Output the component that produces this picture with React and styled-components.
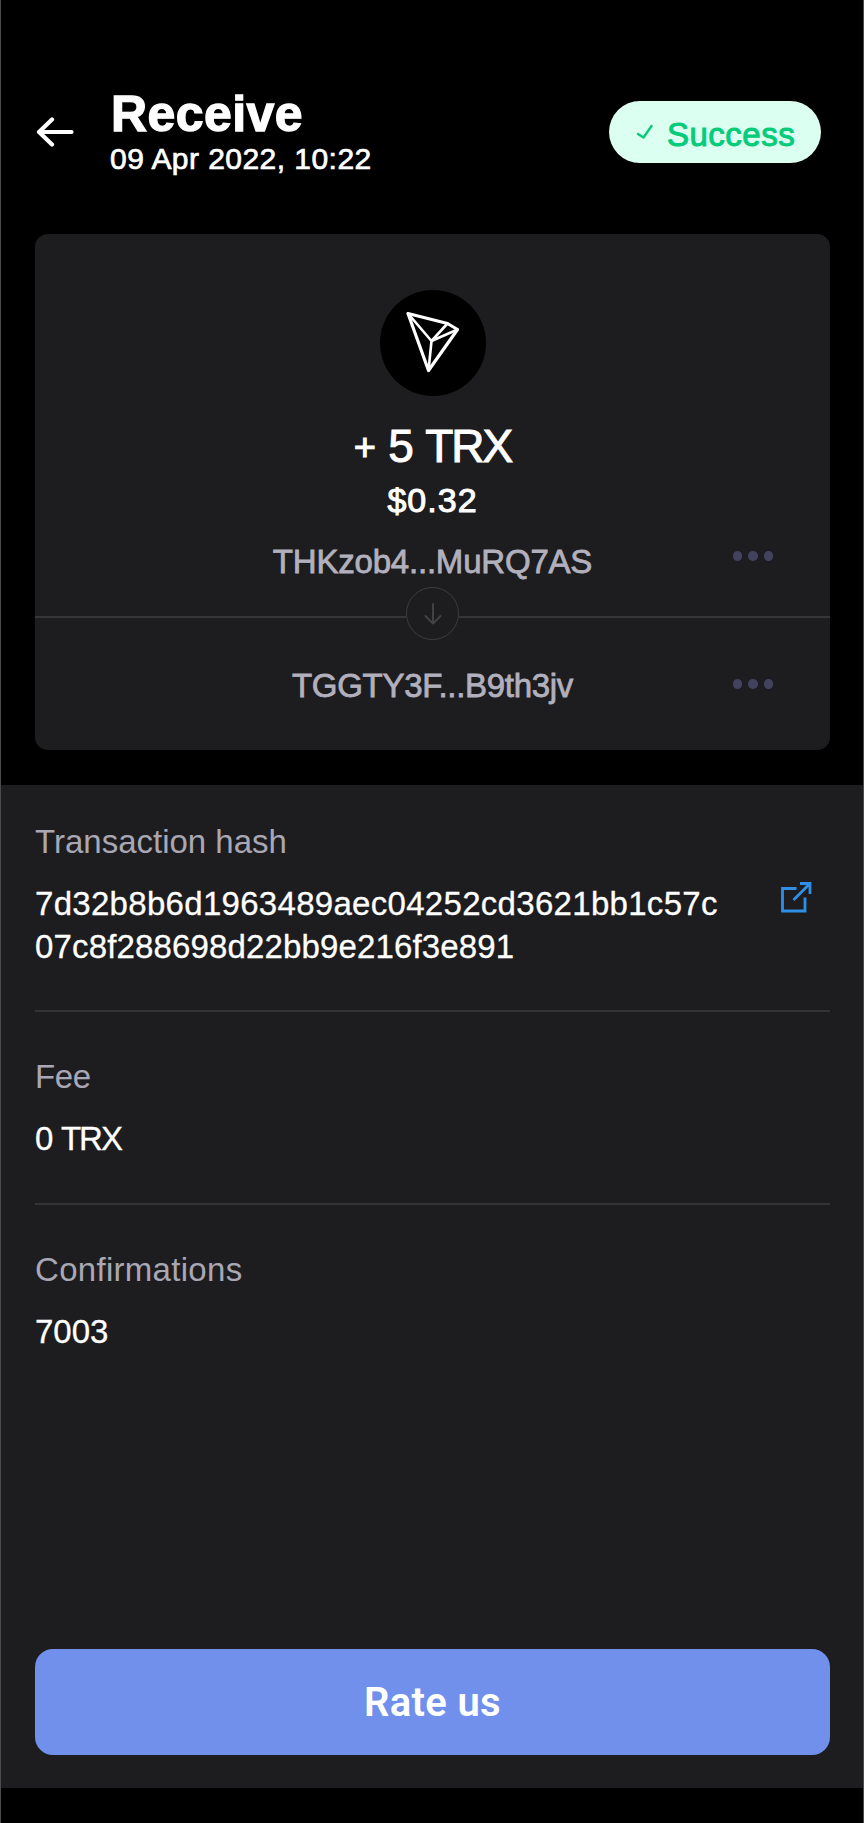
import React from "react";
import styled, { createGlobalStyle } from "styled-components";

const App = () => {
  return (
    <Screen>
      <GlobalStyle />
      <Header>
        <BackButton aria-label="Back">
          <svg width="38" height="30" viewBox="0 0 38 30" fill="none">
            <path
              d="M16 2.5L3 15L16 27.5M3 15H35.5"
              stroke="#fff"
              strokeWidth="4.2"
              strokeLinecap="round"
              strokeLinejoin="round"
            />
          </svg>
        </BackButton>
        <Heading>
          <Title>Receive</Title>
          <DateText>09 Apr 2022, 10:22</DateText>
        </Heading>
        <Status>
          <svg width="18" height="16" viewBox="0 0 18 16" fill="none">
            <path
              d="M2 10L7.5 13.5L15.5 2"
              stroke="#05cb7a"
              strokeWidth="2.4"
              strokeLinecap="round"
              strokeLinejoin="round"
            />
          </svg>
          <StatusText>Success</StatusText>
        </Status>
      </Header>

      <Card>
        <Coin>
          <svg width="106" height="106" viewBox="0 0 106 106" fill="none">
            <g stroke="#fff" strokeLinejoin="round" strokeLinecap="round">
              <path d="M28 23.5L67.5 33.5L77.5 39.5L48.5 80.5Z" strokeWidth="3.2" />
              <path
                d="M28 23.5L51.5 51L48.5 80.5M51.5 51L67.5 33.5M51.5 51L77.5 39.5"
                strokeWidth="2.6"
              />
            </g>
          </svg>
        </Coin>
        <Amount>
          <Sign>+</Sign> 5 TRX
        </Amount>
        <Fiat>$0.32</Fiat>
        <AddressRow>
          <Address $spacing="-0.2px">THKzob4...MuRQ7AS</Address>
          <Dots $top="10px" />
        </AddressRow>
        <Separator>
          <Line />
          <Direction>
            <svg width="20" height="24" viewBox="0 0 20 24" fill="none">
              <path
                d="M10 2V21.5M2.5 14L10 21.5L17.5 14"
                stroke="#424244"
                strokeWidth="2"
                strokeLinecap="round"
                strokeLinejoin="round"
              />
            </svg>
          </Direction>
          <Line />
        </Separator>
        <AddressRow>
          <Address $spacing="-0.3px">TGGTY3F...B9th3jv</Address>
          <Dots $top="14px" />
        </AddressRow>
      </Card>

      <Details>
        <Item>
          <Label>Transaction hash</Label>
          <HashRow>
            <Value>
              <HashLine $spacing="0.3px">
                7d32b8b6d1963489aec04252cd3621bb1c57c
              </HashLine>
              <HashLine $spacing="0.15px">07c8f288698d22bb9e216f3e891</HashLine>
            </Value>
            <LinkButton aria-label="Open in explorer">
              <svg width="32" height="32" viewBox="0 0 32 32" fill="none">
                <path
                  d="M16.5 7.5H2.5V30H25V16.5M13.5 19L29.5 3M20 2.5H30V13"
                  stroke="#2f8fe6"
                  strokeWidth="2.8"
                />
              </svg>
            </LinkButton>
          </HashRow>
        </Item>
        <Item>
          <Label $spacing="-0.4px">Fee</Label>
          <Value $spacing="-2px" $wordSpacing="3px">
            0 TRX
          </Value>
        </Item>
        <Item>
          <Label $spacing="0.3px">Confirmations</Label>
          <Value>7003</Value>
        </Item>
        <RateButton>Rate us</RateButton>
      </Details>
    </Screen>
  );
};

const Dots = ({ $top }) => (
  <Menu $top={$top} aria-label="More">
    <Dot />
    <Dot />
    <Dot />
  </Menu>
);

export default App;

// Styled Components

const GlobalStyle = createGlobalStyle`
  * {
    box-sizing: border-box;
  }
  body {
    margin: 0;
    background: #000;
  }
  button {
    border: none;
    padding: 0;
    background: none;
    font: inherit;
  }
  svg {
    display: block;
  }
`;

const Screen = styled.div`
  display: flex;
  flex-direction: column;
  height: 1823px;
  background: #000;
  border-left: 1px solid #4b4b4c;
  border-right: 1px solid #4b4b4c;
  color: #fff;
  font-family: "Liberation Sans", Arial, sans-serif;
  font-size: 33px;
`;

const Header = styled.header`
  display: flex;
  align-items: flex-start;
  height: 234px;
  padding: 88px 42px 0 35px;
`;

const BackButton = styled.button`
  margin-top: 29px;
`;

const Heading = styled.div`
  margin-left: 36px;
`;

const Title = styled.h1`
  margin: 1px 0 0 1px;
  font-size: 50px;
  line-height: 50px;
  font-weight: 700;
  letter-spacing: 0.4px;
  -webkit-text-stroke: 1.3px #fff;
`;

const DateText = styled.div`
  margin-top: 2px;
  font-size: 30px;
  line-height: 36px;
  letter-spacing: 0.45px;
  -webkit-text-stroke: 0.7px #fff;
`;

const Status = styled.div`
  display: flex;
  align-items: center;
  gap: 13px;
  width: 212px;
  height: 62px;
  margin: 13px 0 0 auto;
  padding-left: 27px;
  border-radius: 31px;
  background: #dbfff0;
`;

const StatusText = styled.span`
  color: #05cb7a;
  font-size: 33px;
  line-height: 42px;
  margin-top: 5px;
  letter-spacing: 0.5px;
  -webkit-text-stroke: 1px #05cb7a;
`;

const Card = styled.section`
  display: flex;
  flex-direction: column;
  align-items: center;
  height: 516px;
  margin: 0 33px 0 34px;
  padding-top: 56px;
  border-radius: 13px;
  background: #1d1d1f;
`;

const Coin = styled.div`
  width: 106px;
  height: 106px;
  border-radius: 50%;
  background: #000;
`;

const Amount = styled.div`
  height: 56px;
  margin-top: 22px;
  font-size: 46px;
  line-height: 56px;
  letter-spacing: -2px;
  word-spacing: 3.5px;
  -webkit-text-stroke: 1px #fff;
`;

const Sign = styled.span`
  font-size: 38px;
  line-height: 1;
  vertical-align: 2px;
`;

const Fiat = styled.div`
  margin-top: 5px;
  font-size: 34px;
  line-height: 42px;
  letter-spacing: 1px;
  -webkit-text-stroke: 1px #fff;
`;

const AddressRow = styled.div`
  display: grid;
  grid-template-columns: 1fr auto 1fr;
  align-self: stretch;
  height: 42px;
  margin-top: 20px;
  padding: 0 57px;
`;

const Address = styled.div`
  grid-column: 2;
  color: #b2b0bd;
  line-height: 42px;
  letter-spacing: ${({ $spacing }) => $spacing};
  -webkit-text-stroke: 0.8px #b2b0bd;
`;

const Menu = styled.button`
  display: flex;
  gap: 6px;
  align-self: start;
  justify-self: end;
  margin-top: ${({ $top }) => $top};
`;

const Dot = styled.span`
  width: 9.5px;
  height: 9.5px;
  border-radius: 50%;
  background: #42425f;
`;

const Separator = styled.div`
  display: flex;
  align-items: flex-start;
  align-self: stretch;
  height: 53px;
  margin: 4px 0 5px;
`;

const Line = styled.div`
  flex: 1;
  height: 2px;
  margin-top: 29px;
  background: #363638;
`;

const Direction = styled.div`
  display: flex;
  align-items: center;
  justify-content: center;
  width: 53px;
  height: 53px;
  border: 1.5px solid #3d3d3f;
  border-radius: 50%;
`;

const Details = styled.section`
  display: flex;
  flex-direction: column;
  height: 1003px;
  margin-top: 35px;
  padding: 0 33px 33px 34px;
  background: #1d1d1f;
`;

const Item = styled.div`
  padding: 44px 0 42px;
  border-bottom: 2px solid #333335;

  &:first-child {
    padding-top: 36px;
  }

  &:nth-child(3) {
    border-bottom: none;
  }
`;

const Label = styled.div`
  color: #a9a7b4;
  line-height: 42px;
  letter-spacing: ${({ $spacing }) => $spacing || "normal"};
`;

const Value = styled.div`
  margin-top: 20px;
  line-height: 42.5px;
  letter-spacing: ${({ $spacing }) => $spacing || "normal"};
  word-spacing: ${({ $wordSpacing }) => $wordSpacing || "normal"};
  -webkit-text-stroke: 0.3px #fff;
`;

const HashRow = styled.div`
  display: flex;
  justify-content: space-between;
  align-items: flex-start;
`;

const HashLine = styled.div`
  letter-spacing: ${({ $spacing }) => $spacing};
`;

const LinkButton = styled.button`
  margin: 18px 18px 0 0;
`;

const RateButton = styled.button`
  flex-shrink: 0;
  height: 106px;
  margin-top: auto;
  border-radius: 18px;
  background: #7190eb;
  color: #fff;
  font-family: Roboto, sans-serif;
  font-size: 40px;
  font-weight: 600;
  letter-spacing: 0.3px;
`;
